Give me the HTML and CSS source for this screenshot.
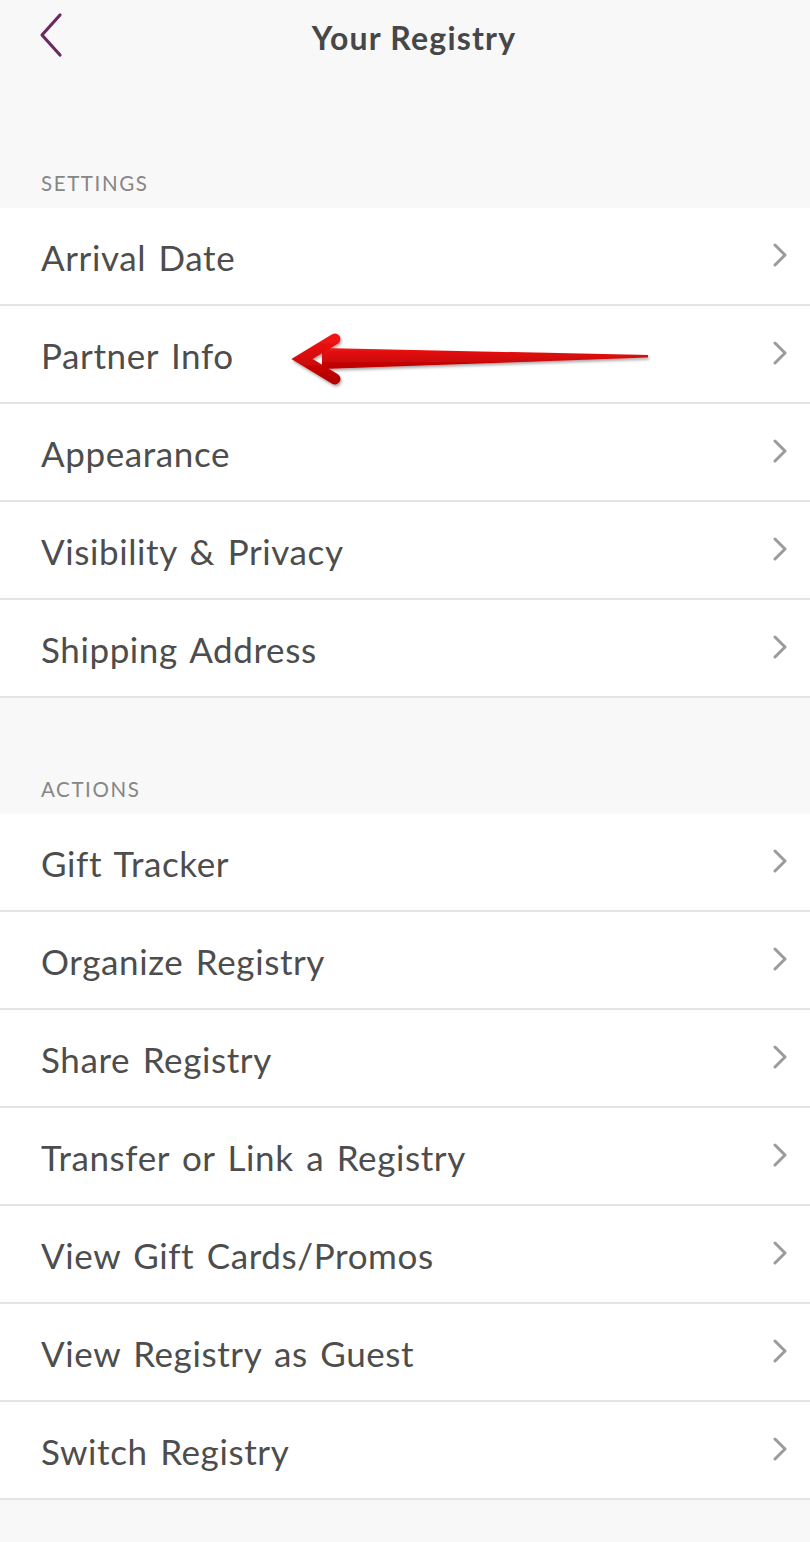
FILE: index.html
```html
<!DOCTYPE html>
<html lang="en">
<head>
  <meta charset="UTF-8">
  <meta name="viewport" content="width=device-width, initial-scale=1.0">
  <title>Your Registry</title>
  <link rel="stylesheet" href="styles.css">
</head>
<body>
  <div id="app">
    <header class="topbar">
      <a class="back" href="#">
        <svg width="26" height="46" viewBox="0 0 26 46">
          <polyline points="22,3 4,23 22,43" fill="none" stroke="#6b2a61" stroke-width="3.2" stroke-linecap="round" stroke-linejoin="round"/>
        </svg>
      </a>
      <h1 class="title">Your Registry</h1>
    </header>

    <!-- settings -->
    <div class="section-head first"><span>SETTINGS</span></div>
    <ul class="list">
      <li class="row">Arrival Date<span class="chev"></span></li>
      <li class="row partner">Partner Info<span class="chev"></span>
        <svg class="pointer" width="380" height="70" viewBox="0 0 380 70">
          <defs>
            <linearGradient id="red" x1="0" y1="0" x2="0" y2="1">
              <stop offset="0" stop-color="#f01414"/>
              <stop offset="1" stop-color="#b50000"/>
            </linearGradient>
            <filter id="shadow" x="-10%" y="-30%" width="120%" height="180%">
              <feDropShadow dx="1" dy="2" stdDeviation="1.6" flood-color="#000" flood-opacity="0.35"/>
            </filter>
          </defs>
          <g filter="url(#shadow)">
            <polygon points="36,20 362,27 362,29.5 36,41" fill="url(#red)"/>
            <polyline points="49,11 16,31 49,51" fill="none" stroke="url(#red)" stroke-width="11" stroke-linecap="round" stroke-linejoin="miter"/>
          </g>
        </svg>
      </li>
      <li class="row">Appearance<span class="chev"></span></li>
      <li class="row">Visibility &amp; Privacy<span class="chev"></span></li>
      <li class="row">Shipping Address<span class="chev"></span></li>
    </ul>

    <!-- actions -->
    <div class="section-head"><span>ACTIONS</span></div>
    <ul class="list">
      <li class="row">Gift Tracker<span class="chev"></span></li>
      <li class="row">Organize Registry<span class="chev"></span></li>
      <li class="row">Share Registry<span class="chev"></span></li>
      <li class="row">Transfer or Link a Registry<span class="chev"></span></li>
      <li class="row">View Gift Cards/Promos<span class="chev"></span></li>
      <li class="row">View Registry as Guest<span class="chev"></span></li>
      <li class="row">Switch Registry<span class="chev"></span></li>
    </ul>
  </div>
</body>
</html>
```

FILE: styles.css
```css
*{
  box-sizing: border-box;
}
body{
  margin: 0;
  background-color: #f8f8f8;
  font-family: "Lato", "Open Sans", sans-serif;
  color: #4d4d4d;
}
#app{
  width: 810px;
  min-height: 1542px;
}
/* header */
.topbar{
  position: relative;
  height: 74px;
  display: flex;
  align-items: center;
  justify-content: center;
  padding-left: 18px;
}
.back{
  position: absolute;
  left: 38px;
  top: 12px;
}
.back svg{
  display: block;
}
.title{
  margin: 0;
  font-size: 32px;
  font-weight: 700;
  color: #474747;
  letter-spacing: 1.2px;
}
/* section titles */
.section-head{
  height: 116px;
  display: flex;
  align-items: flex-end;
  padding: 0 0 13px 41px;
  font-size: 20.5px;
  color: #868686;
  letter-spacing: 1.6px;
}
.section-head.first{
  height: 134px;
}
/* rows */
.list{
  margin: 0;
  padding: 0;
  list-style: none;
  background-color: #fff;
}
.row{
  position: relative;
  height: 98px;
  display: flex;
  align-items: center;
  justify-content: space-between;
  padding: 2px 22px 0 41px;
  border-bottom: 2px solid #e4e4e4;
  font-size: 35px;
  letter-spacing: 0.6px;
  word-spacing: 3px;
}
.chev{
  width: 16px;
  height: 24px;
  margin-top: -4px;
  background: url("data:image/svg+xml;utf8,<svg xmlns='http://www.w3.org/2000/svg' width='16' height='24' viewBox='0 0 16 24'><polyline points='3,2 13,12 3,22' fill='none' stroke='%239b9b9b' stroke-width='3' stroke-linecap='round' stroke-linejoin='round'/></svg>") no-repeat center;
}
.pointer{
  position: absolute;
  left: 286px;
  top: 22px;
}
```
